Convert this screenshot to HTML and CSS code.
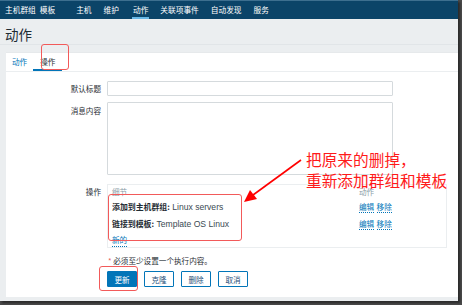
FILE: index.html
```html
<!DOCTYPE html>
<html lang="zh-CN">
<head>
    <meta charset="UTF-8">
    <title>动作</title>
    <link rel="stylesheet" href="styles.css">
</head>
<body>
    <div class="frame">
        <nav class="topnav">
            <a class="n1">主机群组</a>
            <a class="n2">模板</a>
            <a class="n3">主机</a>
            <a class="n4">维护</a>
            <a class="active">动作</a>
            <a>关联项事件</a>
            <a>自动发现</a>
            <a>服务</a>
        </nav>

        <div class="header">
            <h1>动作</h1>
        </div>

        <div class="card">
            <div class="tabs">
                <a class="tab">动作</a>
                <a class="tab current">操作</a>
            </div>

            <div class="form">
                <div class="row">
                    <label class="lbl-input">默认标题</label>
                    <div class="input"></div>
                </div>
                <div class="row row-text">
                    <label class="lbl-text">消息内容</label>
                    <div class="textarea"></div>
                </div>
                <div class="row row-ops">
                    <label class="lbl-ops">操作</label>
                    <div class="ops">
                        <div class="ops-line head">
                            <span>细节</span>
                            <span>动作</span>
                        </div>
                        <div class="ops-line r1">
                            <span><b>添加到主机群组:</b> Linux servers</span>
                            <span><a>编辑</a> <a>移除</a></span>
                        </div>
                        <div class="ops-line r2">
                            <span><b>链接到模板:</b> Template OS Linux</span>
                            <span><a>编辑</a> <a>移除</a></span>
                        </div>
                        <a class="new-link">新的</a>
                    </div>
                </div>
                <div class="note"><span class="star">*</span> 必须至少设置一个执行内容。</div>
                <div class="buttons">
                    <button class="primary">更新</button>
                    <button>克隆</button>
                    <button>删除</button>
                    <button>取消</button>
                </div>
            </div>
        </div>

        <!-- annotations drawn over the screenshot -->
        <div class="mark mark-tab"></div>
        <div class="mark mark-ops"></div>
        <div class="mark mark-btn"></div>
        <svg class="arrow" width="60" height="50" viewBox="0 0 60 50">
            <line x1="57" y1="2" x2="9" y2="37" stroke="#f00" stroke-width="1.6"/>
            <polygon points="0,44 6,32 13,41" fill="#f00"/>
        </svg>
        <div class="callout">把原来的删掉，<br>重新添加群组和模板</div>
    </div>
</body>
</html>
```

FILE: styles.css
```css
* {
    margin: 0;
    padding: 0;
    box-sizing: border-box;
}

body {
    background: #4a4a4a;
    font-family: "Noto Sans CJK SC", "Liberation Sans", sans-serif;
    font-size: 7.6px;
    color: #1f2c33;
    width: 462px;
    height: 305px;
    overflow: hidden;
}

.frame {
    position: relative;
    width: 458px;
    height: 301px;
    background: #ebeef0;
    display: flex;
    flex-direction: column;
    box-shadow: 2px 2px 2px #2a2a2a;
}

/* top menu */
.topnav {
    height: 19px;
    flex-shrink: 0;
    background: #0b4468;
    border-top: 1px solid #3d6f8f;
    display: flex;
    padding-left: 5px;
}

.topnav a {
    color: #ffffff;
    font-size: 7.7px;
    line-height: 17px;
    margin-right: 12px;
    position: relative;
}

.topnav .n1 { margin-right: 4px; }
.topnav .n2 { margin-right: 21px; }
.topnav .n4 { margin-right: 14px; }

.topnav a.active::after {
    content: "";
    position: absolute;
    left: -1px;
    right: -1px;
    bottom: 0;
    height: 2px;
    background: #69b8e6;
}

.header {
    height: 26px;
    flex-shrink: 0;
    padding: 5px 5px 0;
    border-bottom: 1px solid #e1e5e8;
}

.header h1 {
    font-size: 13.5px;
    font-weight: normal;
    color: #1f2c33;
    line-height: 20px;
}

.card {
    flex: 1;
    margin: 7px 0 4px 6px;
    background: #ffffff;
    border-top: 1px solid #e6e9eb;
}

/* tabs */
.tabs {
    height: 19px;
    display: flex;
    border-bottom: 1px solid #ebeef0;
}

.tab {
    color: #0275b8;
    line-height: 17px;
    padding: 0 6px;
}

.tab.current {
    color: #1f2c33;
    border-bottom: 2px solid #0275b8;
    padding: 0 7px;
}

/* form */
.form {
    padding-top: 9px;
}

.row {
    display: flex;
}

.row-text {
    margin-top: 6px;
}

.row-ops {
    margin-top: 9px;
}

.row label {
    width: 101px;
    text-align: right;
    padding-right: 6px;
    color: #1f2c33;
}

.lbl-input {
    line-height: 15px;
}

.lbl-text {
    line-height: 12px;
    padding-top: 3px;
}

.lbl-ops {
    line-height: 14px;
    padding-top: 1px;
}

.input {
    width: 286px;
    height: 15px;
    border: 1px solid #d5dadd;
    border-radius: 1px;
}

.textarea {
    width: 286px;
    height: 73px;
    border: 1px solid #d5dadd;
    border-radius: 1px;
}

.ops {
    width: 340px;
    height: 64px;
    border: 1px solid #ebeef0;
    padding: 0 4px;
}

.ops-line {
    display: grid;
    grid-template-columns: 247px 1fr;
    height: 16px;
    line-height: 16px;
    font-family: "Liberation Sans", "Noto Sans CJK SC", sans-serif;
    font-size: 8.6px;
    color: #3a4a52;
}

.ops-line.head {
    color: #8a9ca6;
    height: 14px;
    line-height: 14px;
    font-family: "Noto Sans CJK SC", sans-serif;
    font-size: 7.6px;
}

.ops-line.r2 {
    height: 17px;
    line-height: 17px;
}

.ops-line b {
    font-weight: bold;
    font-family: "Noto Sans CJK SC", sans-serif;
    font-size: 7.9px;
    color: #1f2c33;
}

.ops-line a,
.new-link {
    color: #0275b8;
    border-bottom: 1px dotted #0275b8;
    font-family: "Noto Sans CJK SC", sans-serif;
    font-size: 7.6px;
}

.new-link {
    display: inline-block;
    line-height: 13px;
    margin-top: 1px;
}

.note {
    margin-top: 7px;
    padding-left: 102px;
    line-height: 12px;
}

.star {
    color: #e45959;
}

.buttons {
    display: flex;
    gap: 7px;
    padding-left: 101px;
    margin-top: 4px;
}

button {
    width: 30px;
    height: 16px;
    border: 1px solid #0275b8;
    border-radius: 1px;
    background: #ffffff;
    color: #1f4f7a;
    font-family: "Noto Sans CJK SC", sans-serif;
    font-size: 7.6px;
}

button.primary {
    background: #0275b8;
    color: #ffffff;
}

/* red annotations */
.mark {
    position: absolute;
    border: 1px solid #f25a5a;
    border-radius: 3px;
}

.mark-tab {
    left: 41px;
    top: 44px;
    width: 28px;
    height: 26px;
}

.mark-ops {
    left: 108px;
    top: 194px;
    width: 134px;
    height: 47px;
}

.mark-btn {
    left: 99px;
    top: 266px;
    width: 39px;
    height: 25px;
}

.arrow {
    position: absolute;
    left: 244px;
    top: 158px;
}

.callout {
    position: absolute;
    left: 306px;
    top: 149px;
    color: #ff1a1a;
    font-size: 15.7px;
    line-height: 21px;
    font-family: "Noto Sans CJK SC", sans-serif;
}
```
